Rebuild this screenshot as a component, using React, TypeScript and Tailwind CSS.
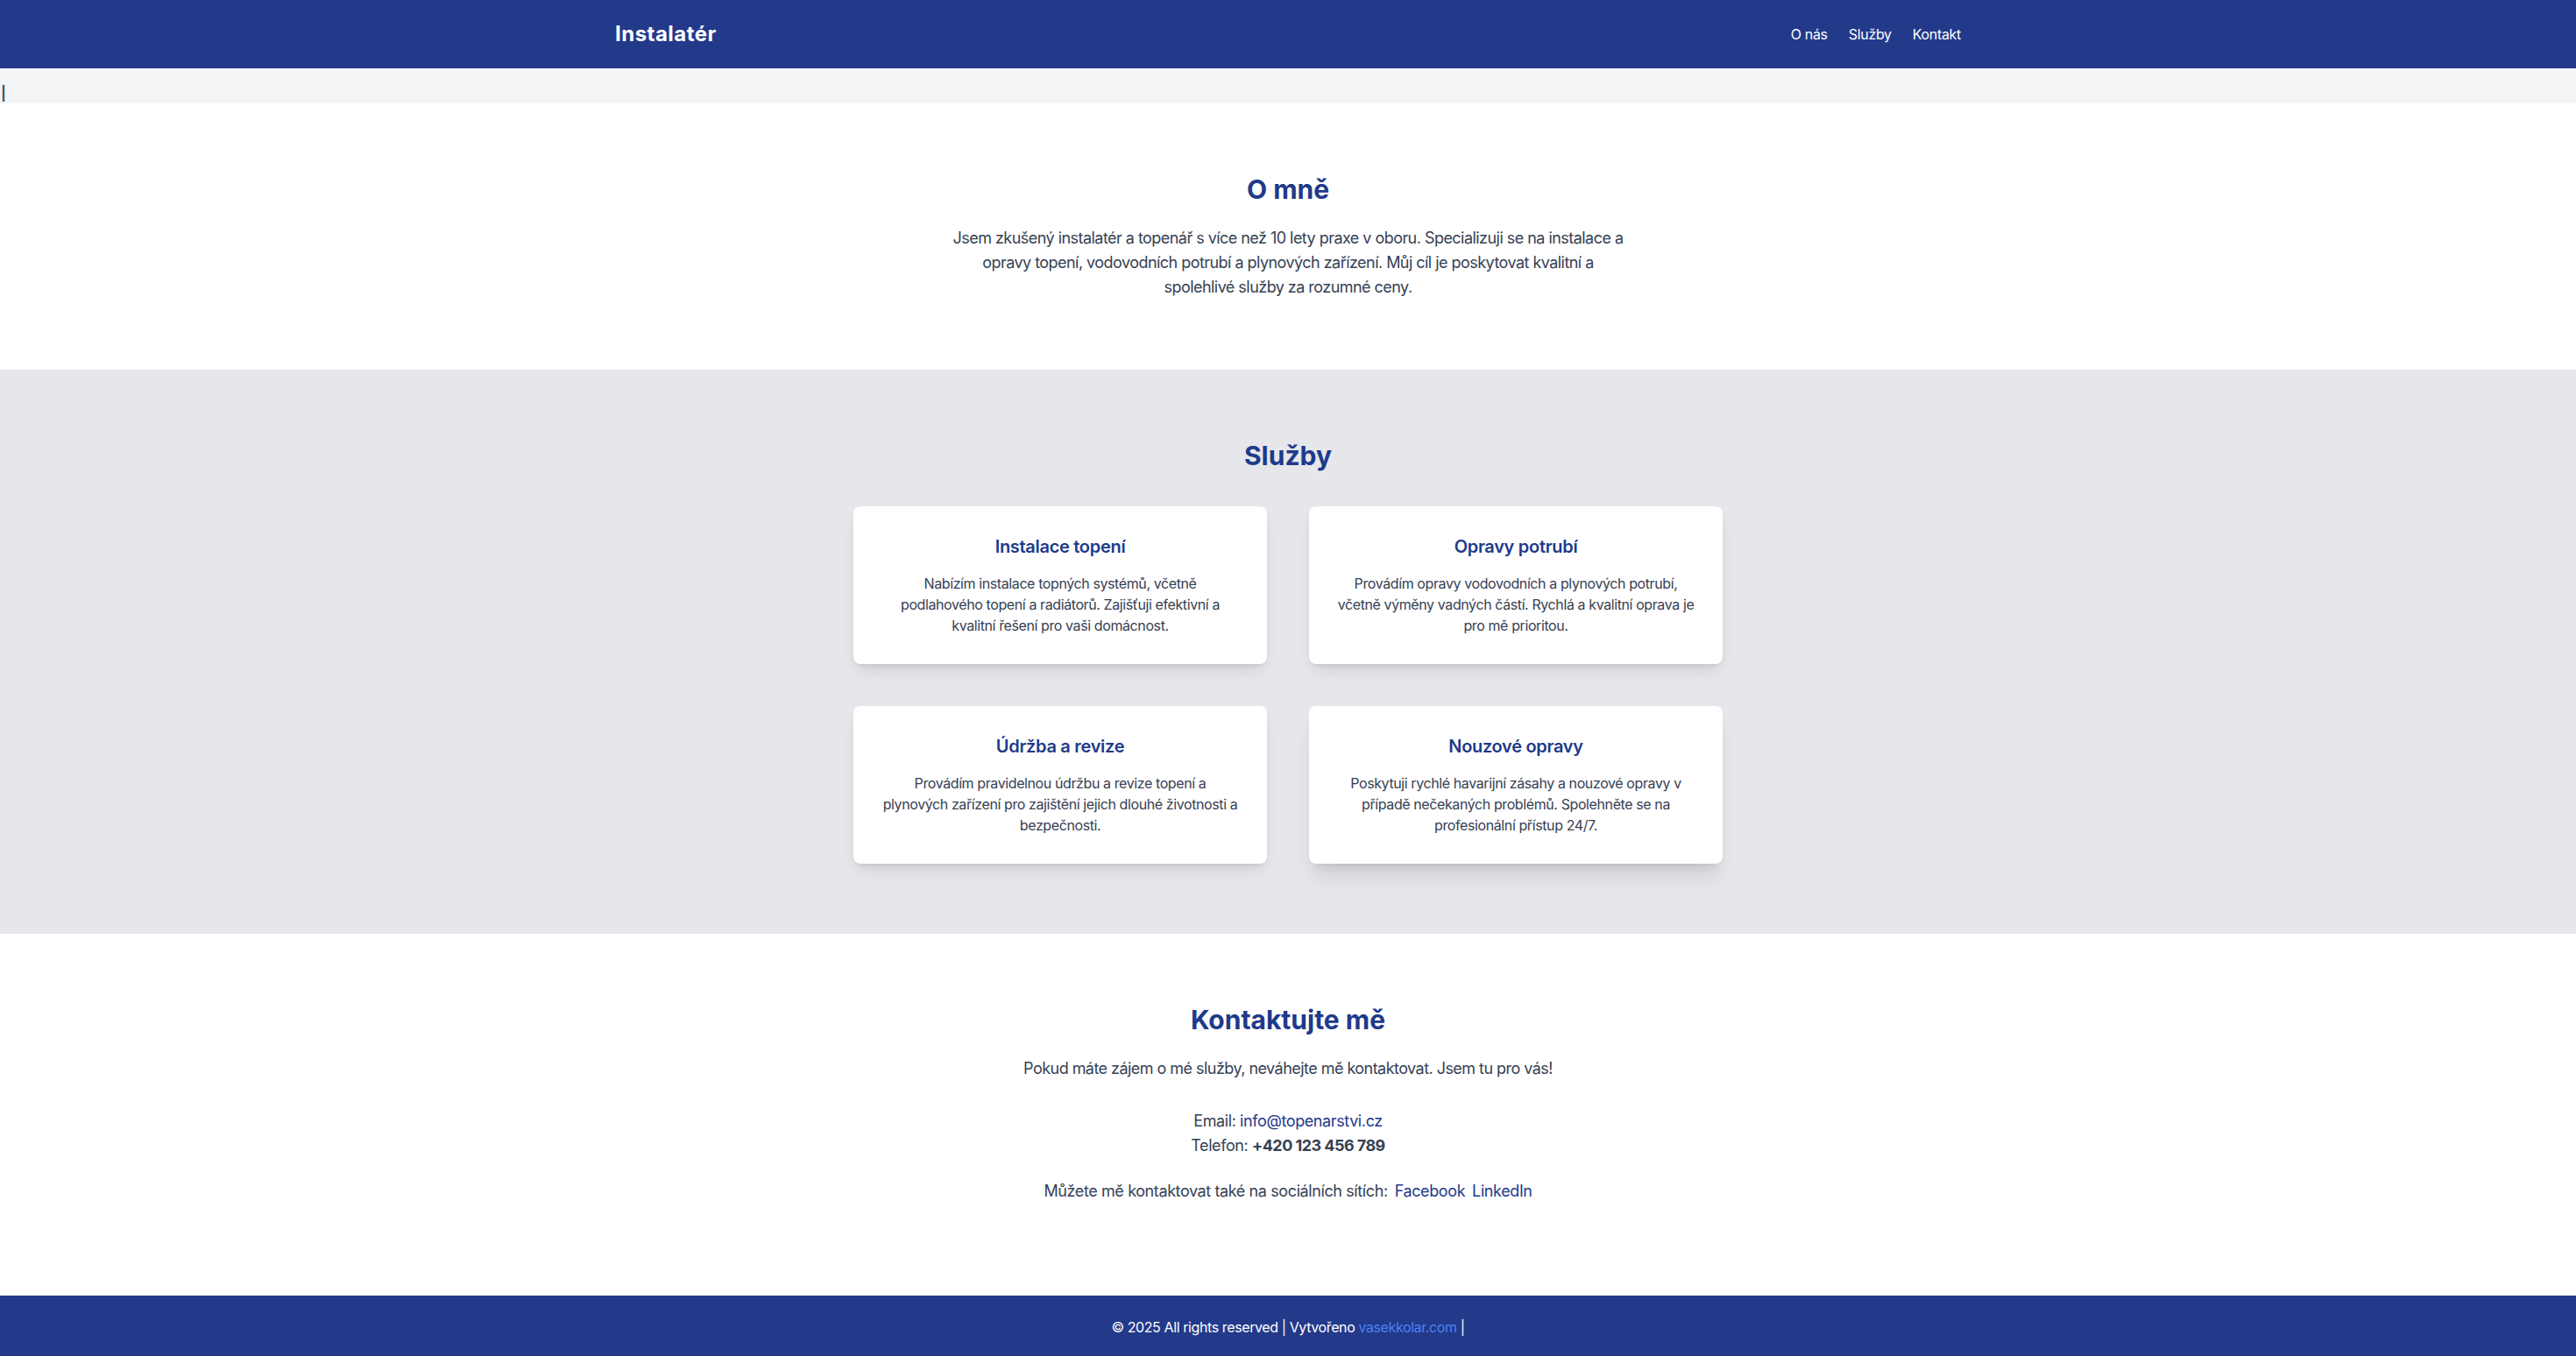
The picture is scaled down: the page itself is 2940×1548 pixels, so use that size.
const SERVICES = [
  {
    title: 'Instalace topení',
    text: 'Nabízím instalace topných systémů, včetně podlahového topení a radiátorů. Zajišťuji efektivní a kvalitní řešení pro vaši domácnost.',
  },
  {
    title: 'Opravy potrubí',
    text: 'Provádím opravy vodovodních a plynových potrubí, včetně výměny vadných částí. Rychlá a kvalitní oprava je pro mě prioritou.',
  },
  {
    title: 'Údržba a revize',
    text: 'Provádím pravidelnou údržbu a revize topení a plynových zařízení pro zajištění jejich dlouhé životnosti a bezpečnosti.',
  },
  {
    title: 'Nouzové opravy',
    text: 'Poskytuji rychlé havarijní zásahy a nouzové opravy v případě nečekaných problémů. Spolehněte se na profesionální přístup 24/7.',
  },
]

export default function App() {
  return (
    <div className="min-h-screen bg-white font-['Inter',sans-serif] text-gray-700">
      {/* Header */}
      <header className="bg-[#23398a] text-white">
        <div className="container mx-auto h-[78px] flex items-center justify-between">
          <span className="text-2xl font-bold tracking-[0.02em]">Instalatér</span>
          <nav className="flex gap-6 text-base tracking-[-0.02em]">
            <a href="#about">O nás</a>
            <a href="#services">Služby</a>
            <a href="#contact">Kontakt</a>
          </nav>
        </div>
      </header>

      {/* typewriter remnant */}
      <div className="bg-gray-100 pt-4 text-base leading-6 text-gray-600">
        <span className="pl-px font-bold">|</span>
      </div>

      {/* About */}
      <section id="about" className="bg-white py-20 text-center">
        <h2 className="text-3xl font-bold text-[#1e3a8a] mb-6">O mně</h2>
        <p className="max-w-[800px] mx-auto text-lg tracking-[-0.03em]">
          Jsem zkušený instalatér a topenář s více než 10 lety praxe v oboru. Specializuji se na instalace a
          <br />
          opravy topení, vodovodních potrubí a plynových zařízení. Můj cíl je poskytovat kvalitní a
          <br />
          spolehlivé služby za rozumné ceny.
        </p>
      </section>

      {/* Services */}
      <section id="services" className="bg-gray-200 py-20">
        <h2 className="text-3xl font-bold text-[#1e3a8a] text-center mb-10">Služby</h2>
        <div className="max-w-5xl mx-auto px-4 grid grid-cols-2 gap-12">
          {SERVICES.map((s, i) => (
            <div
              key={s.title}
              className={`bg-white rounded-lg p-8 text-center ${i === 3 ? 'shadow-xl' : 'shadow-lg'}`}
            >
              <h3 className="text-xl font-semibold tracking-[-0.015em] text-[#1e3a8a] mb-4">{s.title}</h3>
              <p className="text-base tracking-[-0.025em]">{s.text}</p>
            </div>
          ))}
        </div>
      </section>

      {/* Contact */}
      <section id="contact" className="bg-white pt-20 pb-[105px] text-center text-lg tracking-[-0.022em]">
        <h2 className="text-3xl font-bold tracking-normal text-[#1e3a8a] mb-6">Kontaktujte mě</h2>
        <p className="mb-8 tracking-[-0.03em]">
          Pokud máte zájem o mé služby, neváhejte mě kontaktovat. Jsem tu pro vás!
        </p>
        <p>
          Email:{' '}
          <a href="mailto:info@topenarstvi.cz" className="text-[#1e3a8a]">
            info@topenarstvi.cz
          </a>
        </p>
        <p>
          Telefon: <span className="font-bold tracking-[-0.03em]">+420 123 456 789</span>
        </p>
        <p className="mt-6">
          Můžete mě kontaktovat také na sociálních sítích:
          <a href="#" className="text-[#1e3a8a] ml-2">Facebook</a>
          <a href="#" className="text-[#1e3a8a] ml-2">LinkedIn</a>
        </p>
      </section>

      {/* Footer */}
      <footer className="bg-[#23398a] text-white text-center py-6 text-base tracking-[-0.025em]">
        © 2025 All rights reserved | Vytvořeno{' '}
        <a href="#" className="text-[#4b82f5]">vasekkolar.com</a> |
      </footer>
    </div>
  )
}
